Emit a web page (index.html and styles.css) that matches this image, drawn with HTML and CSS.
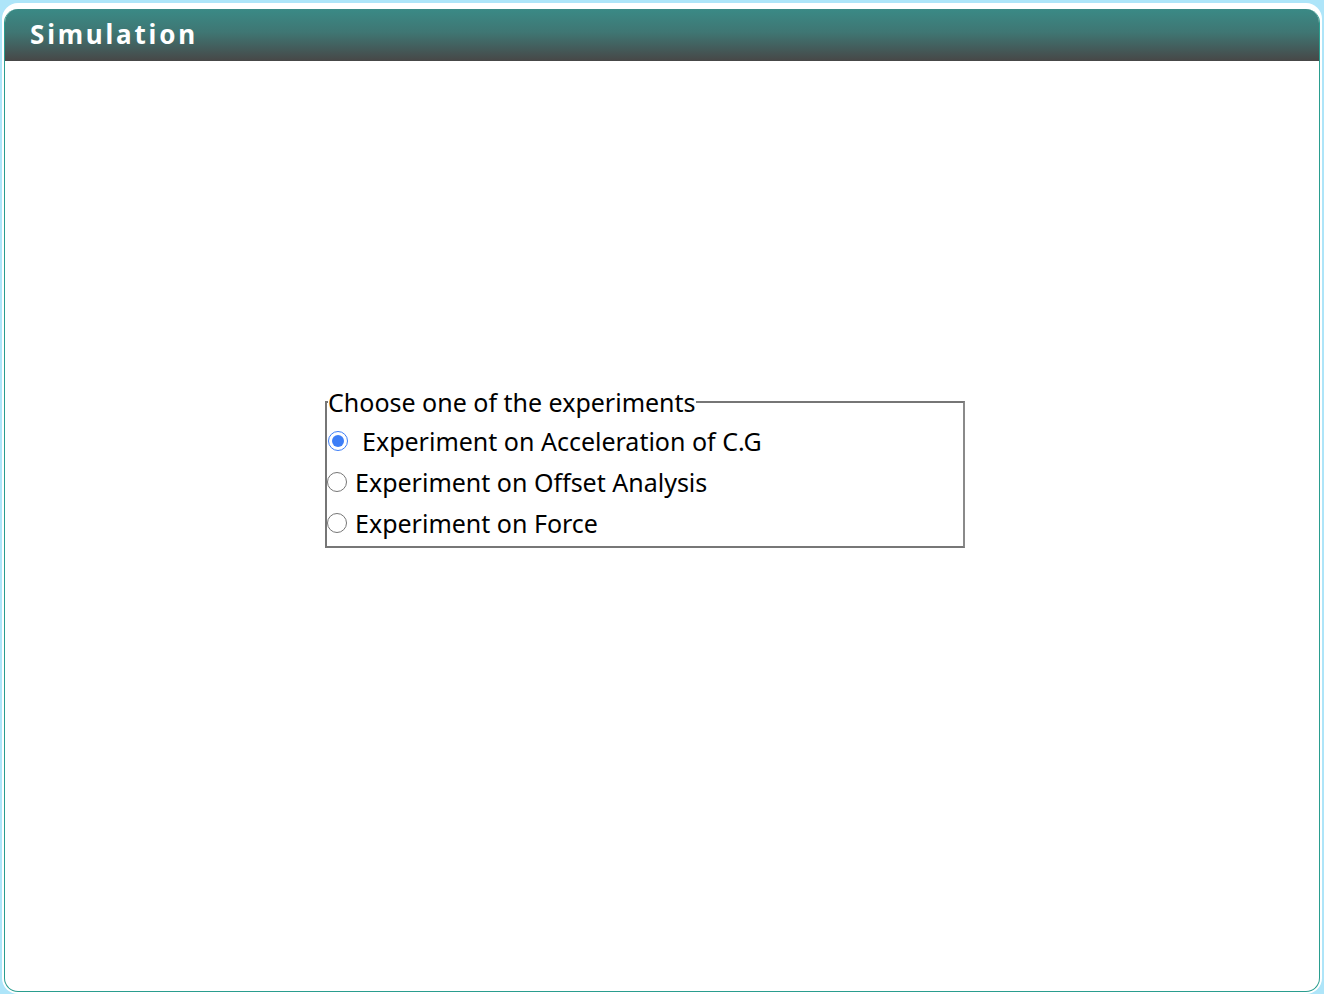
FILE: index.html
```html
<!DOCTYPE html>
<html>
<head>
<meta charset="utf-8">
<title>Simulation</title>
<link rel="stylesheet" href="styles.css">
</head>
<body>
<div class="frame">
  <div class="panel">
    <div class="header"><h1 class="title">Simulation</h1></div>
    <div class="content">
      <fieldset class="choices">
        <legend class="legend">Choose one of the experiments</legend>
        <div class="option first">
          <input type="radio" name="exp" id="e1" class="radio" checked>
          <label for="e1">Experiment on Acceleration of C.G</label>
        </div>
        <div class="option">
          <input type="radio" name="exp" id="e2" class="radio">
          <label for="e2">Experiment on Offset Analysis</label>
        </div>
        <div class="option">
          <input type="radio" name="exp" id="e3" class="radio">
          <label for="e3">Experiment on Force</label>
        </div>
      </fieldset>
    </div>
  </div>
</div>
</body>
</html>
```

FILE: styles.css
```css
html, body {
  margin: 0;
  padding: 0;
  height: 100%;
}
body {
  background: #aee5f9;
  font-family: "Noto Sans", "Lato", sans-serif;
  color: #000;
}
.frame {
  box-sizing: border-box;
  height: 991px;
  margin: 3px 2px 0 2px;
  padding: 6px 2px 0 2px;
  background: #fff;
  border-radius: 16px;
}
.panel {
  box-sizing: border-box;
  height: 983px;
  border: 1px solid #2a9d8f;
  border-top: none;
  border-radius: 14px;
  overflow: hidden;
  background: #fff;
  display: flex;
  flex-direction: column;
}
.header {
  height: 52px;
  flex: none;
  background: linear-gradient(to bottom, #3a8a86 0%, #3f7673 45%, #474747 100%);
  display: flex;
  align-items: center;
  padding-left: 25px;
}
.title {
  margin: 0 0 2px 0;
  color: #fff;
  font-size: 26px;
  font-weight: 700;
  letter-spacing: 2.8px;
  line-height: 30px;
}
.content {
  flex: 1;
  padding-top: 327px;
  padding-left: 320px;
}
.choices {
  width: 640px;
  box-sizing: border-box;
  margin: 0;
  padding: 4px 0 3px 0;
  border: 2px solid #767676;
  border-right-color: #8a8a8a;
  border-bottom-color: #777;
  font-size: 25px;
}
.legend {
  padding: 0;
  margin-left: 1px;
  font-size: 25px;
  line-height: 28px;
}
.option {
  display: flex;
  align-items: center;
  height: 41px;
  line-height: 30px;
}
.radio {
  width: 20px;
  height: 20px;
  margin: 0 8px 0 0;
  accent-color: #3d7ef7;
}
.option.first .radio {
  margin-left: 1px;
  margin-right: 14px;
}
```
